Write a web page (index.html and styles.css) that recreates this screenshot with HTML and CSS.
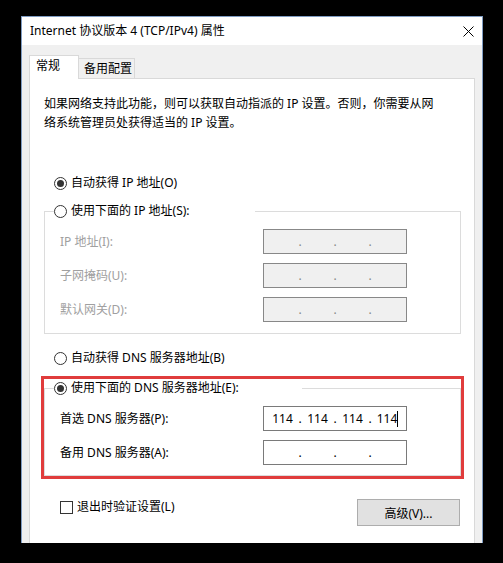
FILE: index.html
```html
<!DOCTYPE html>
<html lang="zh-CN">
<head>
  <meta charset="UTF-8" />
  <meta name="viewport" content="width=device-width, initial-scale=1.0"/>
  <title>Internet 协议版本 4 (TCP/IPv4) 属性</title>
  <link rel="stylesheet" href="styles.css">
</head>
<body>
  <div class="window">
    <div class="titlebar">
      <span>Internet 协议版本 4 (TCP/IPv4) 属性</span>
      <svg class="close" width="11" height="11" viewBox="0 0 11 11">
        <path d="M0.5 0.5 L10.5 10.5 M10.5 0.5 L0.5 10.5" stroke="#000" stroke-width="1" fill="none"/>
      </svg>
    </div>

    <div class="content">
      <div class="tabs">
        <div class="tab active">常规</div>
        <div class="tab">备用配置</div>
      </div>

      <div class="panel">
        <p class="desc">如果网络支持此功能，则可以获取自动指派的 IP 设置。否则，你需要从网络系统管理员处获得适当的 IP 设置。</p>

        <div class="radio-row first">
          <span class="radio checked"></span>
          <span>自动获得 IP 地址(O)</span>
        </div>

        <div class="group">
          <div class="group-title ip-title">
            <span class="radio"></span>
            <span>使用下面的 IP 地址(S):</span>
          </div>
          <div class="fields">
            <label class="disabled">IP 地址(I):</label>
            <div class="ip-field off">
              <span class="seg"></span><span class="dot">.</span><span class="seg"></span><span class="dot">.</span><span class="seg"></span><span class="dot">.</span><span class="seg"></span>
            </div>
            <label class="disabled">子网掩码(U):</label>
            <div class="ip-field off">
              <span class="seg"></span><span class="dot">.</span><span class="seg"></span><span class="dot">.</span><span class="seg"></span><span class="dot">.</span><span class="seg"></span>
            </div>
            <label class="disabled">默认网关(D):</label>
            <div class="ip-field off">
              <span class="seg"></span><span class="dot">.</span><span class="seg"></span><span class="dot">.</span><span class="seg"></span><span class="dot">.</span><span class="seg"></span>
            </div>
          </div>
        </div>

        <div class="radio-row dns-auto">
          <span class="radio"></span>
          <span>自动获得 DNS 服务器地址(B)</span>
        </div>

        <div class="group dns">
          <div class="highlight"></div>
          <div class="group-title dns-title">
            <span class="radio checked"></span>
            <span>使用下面的 DNS 服务器地址(E):</span>
          </div>
          <div class="fields">
            <label>首选 DNS 服务器(P):</label>
            <div class="ip-field">
              <span class="seg">114</span><span class="dot">.</span><span class="seg">114</span><span class="dot">.</span><span class="seg">114</span><span class="dot">.</span><span class="seg">114<span class="caret"></span></span>
            </div>
            <label>备用 DNS 服务器(A):</label>
            <div class="ip-field">
              <span class="seg"></span><span class="dot">.</span><span class="seg"></span><span class="dot">.</span><span class="seg"></span><span class="dot">.</span><span class="seg"></span>
            </div>
          </div>
        </div>

        <div class="bottom-row">
          <div class="check-row">
            <span class="checkbox"></span>
            <span>退出时验证设置(L)</span>
          </div>
          <button class="btn">高级(V)...</button>
        </div>
      </div>
    </div>
  </div>
</body>
</html>
```

FILE: styles.css
```css
    body {
      margin: 0;
      background-color: #000;
      font-family: "Noto Sans", "Noto Sans CJK SC", sans-serif;
      font-size: 12px;
      color: #000;
    }

    .window {
      margin: 16px 0 0 21px;
      width: 462px;
      height: 527px;
      box-sizing: border-box;
      border: 1px solid #7f9cc2;
      border-bottom: none;
      background-color: #f0f0f0;
      overflow: hidden;
    }

    .titlebar {
      height: 28px;
      background-color: #fff;
      display: flex;
      align-items: center;
      justify-content: space-between;
      padding: 0 8px 0 8px;
      line-height: 16px;
    }

    .close {
      display: block;
    }

    .content {
      padding: 10px 7px 0 7px;
    }

    .tabs {
      display: flex;
      align-items: flex-end;
    }

    .tab {
      box-sizing: border-box;
      height: 20px;
      border: 1px solid #d9d9d9;
      border-bottom: none;
      background-color: #f0f0f0;
      line-height: 17px;
      padding: 1px 0 0 5px;
      width: 56px;
      white-space: nowrap;
    }

    .tab.active {
      position: relative;
      z-index: 1;
      height: 24px;
      width: 50px;
      margin-bottom: -1px;
      background-color: #fff;
      padding: 1px 0 0 6px;
    }

    .tab.active + .tab {
      border-left: none;
    }

    .panel {
      background-color: #fff;
      border: 1px solid #d9d9d9;
      padding: 15px 13px 40px 14px;
    }

    .desc {
      margin: 0;
      line-height: 19px;
      width: 396px;
    }

    .radio-row, .group-title, .check-row {
      display: flex;
      align-items: center;
      gap: 4px;
      height: 20px;
      line-height: 20px;
    }

    .radio-row {
      margin-left: 10px;
    }

    .radio-row.first {
      margin-top: 41px;
    }

    .radio-row.dns-auto {
      margin-top: 14px;
    }

    .radio {
      box-sizing: border-box;
      width: 13px;
      height: 13px;
      border: 1px solid #333;
      border-radius: 50%;
      display: flex;
      align-items: center;
      justify-content: center;
      flex-shrink: 0;
      background-color: #fff;
    }

    .radio.checked::after {
      content: "";
      width: 7px;
      height: 7px;
      border-radius: 50%;
      background-color: #333;
    }

    .group {
      position: relative;
      margin-top: 18px;
      border: 1px solid #dcdcdc;
      padding: 0 15px 11px 15px;
    }

    .group.dns {
      margin-top: 20px;
      padding-bottom: 10px;
    }

    .group-title {
      margin: -11px 0 0 -6px;
      background-color: #fff;
      box-sizing: border-box;
    }

    .ip-title {
      width: 201px;
    }

    .dns-title {
      width: 248px;
    }

    .fields {
      display: grid;
      grid-template-columns: 203px 144px;
      row-gap: 9px;
      margin-top: 8px;
      align-items: center;
    }

    .fields label {
      line-height: 20px;
    }

    .disabled {
      color: #a0a0a0;
    }

    .ip-field {
      box-sizing: border-box;
      height: 25px;
      border: 1px solid #7a7a7a;
      background-color: #fff;
      display: flex;
      align-items: center;
      padding: 0 3px;
    }

    .ip-field.off {
      background-color: #f0f0f0;
      border-color: #888;
      color: #888;
    }

    .seg {
      width: 31px;
      text-align: center;
      line-height: 16px;
      white-space: nowrap;
    }

    .dot {
      width: 4px;
      text-align: center;
      line-height: 16px;
    }

    .caret {
      display: inline-block;
      width: 1px;
      height: 16px;
      background-color: #000;
      vertical-align: -4px;
    }

    .highlight {
      position: absolute;
      top: -13px;
      left: -4px;
      right: -4px;
      bottom: -4px;
      border: 3px solid #e03c3c;
      pointer-events: none;
    }

    .bottom-row {
      display: flex;
      justify-content: space-between;
      align-items: flex-start;
      margin-top: 23px;
      padding: 0 1px 0 16px;
    }

    .check-row {
      height: 14px;
      line-height: 14px;
      margin-top: 1px;
    }

    .checkbox {
      box-sizing: border-box;
      width: 13px;
      height: 13px;
      border: 1px solid #333;
      background-color: #fff;
    }

    .btn {
      width: 103px;
      height: 27px;
      background-color: #e1e1e1;
      border: 1px solid #adadad;
      font-family: inherit;
      font-size: 12px;
      color: #000;
      padding: 0;
    }
```
